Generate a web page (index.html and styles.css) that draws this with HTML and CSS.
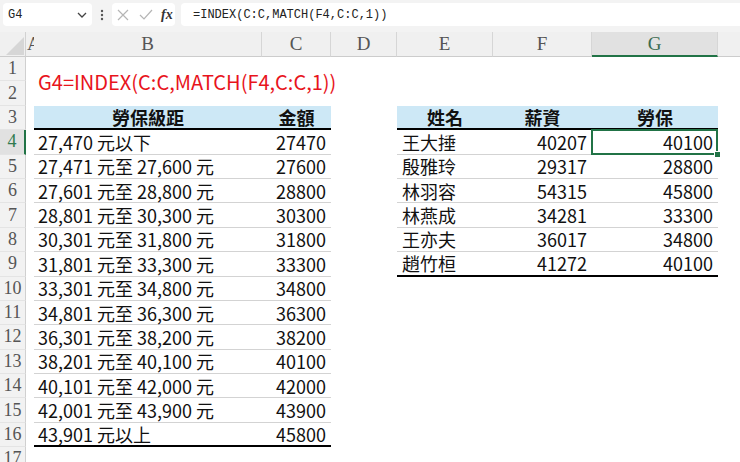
FILE: index.html
```html
<!DOCTYPE html>
<html lang="zh-Hant">
<head>
<meta charset="utf-8">
<title>勞保級距</title>
<link rel="stylesheet" href="styles.css">
</head>
<body>
<div class="fbar">
  <div class="namebox"><span>G4</span>
    <svg class="chev" width="10" height="6" viewBox="0 0 10 6"><path d="M1 1 L5 5 L9 1" fill="none" stroke="#444" stroke-width="1.3"/></svg>
  </div>
  <div class="more"><svg width="4" height="12" viewBox="0 0 4 12"><circle cx="2" cy="2" r="1.2" fill="#555"/><circle cx="2" cy="6" r="1.2" fill="#555"/><circle cx="2" cy="10" r="1.2" fill="#555"/></svg></div>
  <div class="btns">
    <svg class="x" width="12" height="12" viewBox="0 0 12 12"><path d="M1 1 L11 11 M11 1 L1 11" stroke="#b5b5b5" stroke-width="1.2"/></svg>
    <svg class="ok" width="14" height="11" viewBox="0 0 14 11"><path d="M1 6 L5 10 L13 1" fill="none" stroke="#b5b5b5" stroke-width="1.2"/></svg>
    <span class="fx">fx</span>
  </div>
  <div class="formula">=INDEX(C:C,MATCH(F4,C:C,1))</div>
</div>

<div class="sheet">
  <div class="row">
    <div class="corner"><svg width="26" height="25" viewBox="0 0 26 25"><polygon points="24,5 24,23 6,23" fill="#d6d6d6"/></svg></div>
    <div class="ch cha">A</div><div class="ch">B</div><div class="ch">C</div><div class="ch">D</div><div class="ch">E</div><div class="ch">F</div><div class="ch chsel">G</div><div class="ch chend"></div>
  </div>
  <div class="row">
    <div class="rh">1</div><div class="c"></div><div class="title">G4=INDEX(C:C,MATCH(F4,C:C,1))</div><div class="c"></div><div class="c"></div><div class="c"></div><div class="c"></div><div class="c"></div>
  </div>
  <div class="row">
    <div class="rh">2</div><div class="c"></div><div class="c"></div><div class="c"></div><div class="c"></div><div class="c"></div><div class="c"></div>
  </div>
  <div class="row">
    <div class="rh">3</div><div class="c"></div><div class="c hd">勞保級距</div><div class="c hd">金額</div><div class="c"></div><div class="c hd">姓名</div><div class="c hd">薪資</div><div class="c hd">勞保</div><div class="c"></div>
  </div>
  <div class="row">
    <div class="rh rhsel">4</div><div class="c"></div><div class="c t1">27,470 元以下</div><div class="c t1 num">27470</div><div class="c"></div><div class="c t2">王大捶</div><div class="c t2 num">40207</div><div class="c t2 num sel">40100</div><div class="c"></div>
  </div>
  <div class="row">
    <div class="rh">5</div><div class="c"></div><div class="c t1">27,471 元至 27,600 元</div><div class="c t1 num">27600</div><div class="c"></div><div class="c t2">殷雅玲</div><div class="c t2 num">29317</div><div class="c t2 num">28800</div><div class="c"></div>
  </div>
  <div class="row">
    <div class="rh">6</div><div class="c"></div><div class="c t1">27,601 元至 28,800 元</div><div class="c t1 num">28800</div><div class="c"></div><div class="c t2">林羽容</div><div class="c t2 num">54315</div><div class="c t2 num">45800</div><div class="c"></div>
  </div>
  <div class="row">
    <div class="rh">7</div><div class="c"></div><div class="c t1">28,801 元至 30,300 元</div><div class="c t1 num">30300</div><div class="c"></div><div class="c t2">林燕成</div><div class="c t2 num">34281</div><div class="c t2 num">33300</div><div class="c"></div>
  </div>
  <div class="row">
    <div class="rh">8</div><div class="c"></div><div class="c t1">30,301 元至 31,800 元</div><div class="c t1 num">31800</div><div class="c"></div><div class="c t2">王亦夫</div><div class="c t2 num">36017</div><div class="c t2 num">34800</div><div class="c"></div>
  </div>
  <div class="row">
    <div class="rh">9</div><div class="c"></div><div class="c t1">31,801 元至 33,300 元</div><div class="c t1 num">33300</div><div class="c"></div><div class="c t2 last">趙竹桓</div><div class="c t2 num last">41272</div><div class="c t2 num last">40100</div><div class="c"></div>
  </div>
  <div class="row">
    <div class="rh">10</div><div class="c"></div><div class="c t1">33,301 元至 34,800 元</div><div class="c t1 num">34800</div><div class="c"></div><div class="c"></div><div class="c"></div><div class="c"></div><div class="c"></div>
  </div>
  <div class="row">
    <div class="rh">11</div><div class="c"></div><div class="c t1">34,801 元至 36,300 元</div><div class="c t1 num">36300</div><div class="c"></div><div class="c"></div><div class="c"></div><div class="c"></div><div class="c"></div>
  </div>
  <div class="row">
    <div class="rh">12</div><div class="c"></div><div class="c t1">36,301 元至 38,200 元</div><div class="c t1 num">38200</div><div class="c"></div><div class="c"></div><div class="c"></div><div class="c"></div><div class="c"></div>
  </div>
  <div class="row">
    <div class="rh">13</div><div class="c"></div><div class="c t1">38,201 元至 40,100 元</div><div class="c t1 num">40100</div><div class="c"></div><div class="c"></div><div class="c"></div><div class="c"></div><div class="c"></div>
  </div>
  <div class="row">
    <div class="rh">14</div><div class="c"></div><div class="c t1">40,101 元至 42,000 元</div><div class="c t1 num">42000</div><div class="c"></div><div class="c"></div><div class="c"></div><div class="c"></div><div class="c"></div>
  </div>
  <div class="row">
    <div class="rh">15</div><div class="c"></div><div class="c t1">42,001 元至 43,900 元</div><div class="c t1 num">43900</div><div class="c"></div><div class="c"></div><div class="c"></div><div class="c"></div><div class="c"></div>
  </div>
  <div class="row">
    <div class="rh">16</div><div class="c"></div><div class="c t1 last">43,901 元以上</div><div class="c t1 num last">45800</div><div class="c"></div><div class="c"></div><div class="c"></div><div class="c"></div><div class="c"></div>
  </div>
  <div class="row">
    <div class="rh">17</div><div class="c"></div><div class="c"></div><div class="c"></div><div class="c"></div><div class="c"></div><div class="c"></div><div class="c"></div><div class="c"></div>
  </div>
</div>
</body>
</html>
```

FILE: styles.css
```css
html, body {
  margin: 0;
  padding: 0;
}
body {
  width: 740px;
  height: 462px;
  overflow: hidden;
  background: #ffffff;
  font-family: "Noto Sans CJK TC", "Noto Sans", sans-serif;
}

/* formula bar */
.fbar {
  height: 32px;
  box-sizing: border-box;
  background: #f3f3f3;
  display: flex;
  align-items: flex-start;
  padding: 3px 0 0 3px;
}
.namebox {
  width: 89px;
  height: 23px;
  box-sizing: border-box;
  background: #ffffff;
  border-radius: 4px;
  display: flex;
  align-items: center;
  justify-content: space-between;
  padding: 0 5px 0 5px;
  font: 12px "Liberation Mono", monospace;
  color: #222;
}
.more {
  width: 20px;
  height: 23px;
  display: flex;
  align-items: center;
  justify-content: center;
}
.btns {
  width: 63px;
  height: 23px;
  box-sizing: border-box;
  background: #ffffff;
  border-radius: 4px;
  display: flex;
  align-items: center;
  padding-left: 5px;
  gap: 0;
}
.btns .x { margin-right: 10px; }
.btns .ok { margin-right: 8px; }
.fx {
  font: italic bold 14px "Liberation Serif", serif;
  color: #333;
}
.formula {
  flex: 1;
  height: 23px;
  margin-left: 6px;
  background: #ffffff;
  border-radius: 4px 0 0 4px;
  display: flex;
  align-items: center;
  padding-left: 12px;
  font: 12px "Liberation Mono", monospace;
  color: #222;
}

/* sheet grid */
.sheet {
  display: grid;
  grid-template-columns: 26px 8px 228px 69px 66px 96px 99px 126px 1fr;
  grid-template-rows: 25px;
  grid-auto-rows: 24.4px;
}
.row { display: contents; }

.corner {
  background: #f0f0f0;
  border-right: 1px solid #d2d2d2;
  border-bottom: 1px solid #cccccc;
  box-sizing: border-box;
}
.corner svg { display: block; }

.ch {
  background: #f0f0f0;
  border-right: 1px solid #d6d6d6;
  border-bottom: 1px solid #cccccc;
  box-sizing: border-box;
  display: flex;
  align-items: center;
  justify-content: center;
  font: 19px "Liberation Serif", serif;
  color: #555;
  overflow: hidden;
}
.cha { border-right: none; justify-content: flex-start; padding-left: 1px; }
.chsel {
  background: #e1e1e1;
  color: #3b6b50;
  border-bottom: 2px solid #217346;
}
.chend { border-right: none; }

.rh {
  background: #f2f2f2;
  border-right: 1px solid #d0d0d0;
  border-bottom: 1px solid #e4e4e4;
  box-sizing: border-box;
  display: flex;
  align-items: center;
  justify-content: center;
  font: 18px "Liberation Serif", serif;
  color: #555;
}
.rhsel {
  background: #e1e1e1;
  color: #2f7a4f;
  border-right: 2px solid #217346;
}

.c {
  box-sizing: border-box;
  display: flex;
  align-items: center;
  padding: 0 4px;
  font-size: 18px;
  color: #111;
  white-space: nowrap;
  min-width: 0;
}

.title {
  grid-column: span 2;
  grid-row: span 2;
  display: flex;
  align-items: center;
  padding: 0 0 0 4px;
  font-size: 20px;
  color: #e8141c;
  white-space: nowrap;
}

.hd {
  background: #cde8f6;
  font-weight: bold;
  justify-content: center;
  border-bottom: 2px solid #000;
}
.t1, .t2 {
  border-bottom: 1px solid #d3d3d3;
}
.t2 { padding-left: 5px; }
.num { justify-content: flex-end; padding-right: 5px; }
.last { border-bottom: 2px solid #000; }

.sel { position: relative; }
.sel::after {
  content: "";
  position: absolute;
  left: -1px;
  top: -1px;
  right: 0;
  bottom: -1px;
  border: 2px solid #217346;
}
.sel::before {
  content: "";
  position: absolute;
  right: -3px;
  bottom: -4px;
  width: 5px;
  height: 5px;
  background: #217346;
  border: 1px solid #fff;
  z-index: 2;
}
```
